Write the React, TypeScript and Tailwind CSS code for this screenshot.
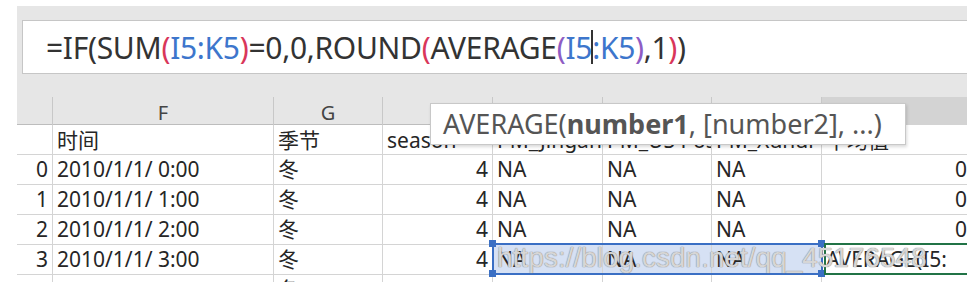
import React from "react";

const font = "font-['Noto_Sans','Noto_Sans_CJK_SC',sans-serif]";

const cols = "grid grid-cols-[36px_221px_109px_110px_110px_109px_110px_150px]";

const letters = ["", "F", "G", "H", "I", "J", "K", "L"];
const titles = ["", "时间", "季节", "season", "PM_Jingan", "PM_US Post", "PM_Xuhui", "平均值"];

type Row = { idx: string; time: string };

const rows: Row[] = [
  { idx: "0", time: "2010/1/1/ 0:00" },
  { idx: "1", time: "2010/1/1/ 1:00" },
  { idx: "2", time: "2010/1/1/ 2:00" },
  { idx: "3", time: "2010/1/1/ 3:00" },
  { idx: "", time: "" },
];

function Cell({ children, right, className = "" }: { children?: React.ReactNode; right?: boolean; className?: string }) {
  return (
    <div
      className={`h-[30px] border-r border-b border-[#d4d4d4] flex items-center overflow-hidden whitespace-nowrap px-[4px] ${
        right ? "justify-end" : ""
      } ${className}`}
    >
      {children}
    </div>
  );
}

function Handle({ className }: { className: string }) {
  return <div className={`absolute w-[7px] h-[7px] bg-[#3a6fc4] ${className}`} />;
}

export default function App() {
  return (
    <div className={`relative w-[967px] h-[282px] overflow-hidden bg-white pt-[6px] pl-[17px] ${font} text-[#262626]`}>
      <div className="bg-[#e6e6e6]">
        {/* formula bar */}
        <div className="pt-[14px] pl-[5px] pb-[23px]">
          <div className="h-[54px] bg-white border border-[#c6c6c6] border-r-0 flex items-center pl-[23px] text-[30px] text-[#333] tracking-[-0.3px]">
            <span>=IF(SUM</span>
            <span className="text-[#d9365a]">(</span>
            <span className="text-[#3d76cc]">I5:K5</span>
            <span className="text-[#d9365a]">)</span>
            <span>=0,0,ROUND</span>
            <span className="text-[#d9365a]">(</span>
            <span>AVERAGE</span>
            <span className="text-[#8e5cc4]">(</span>
            <span className="text-[#3d76cc]">I5</span>
            <span className="inline-block w-[2px] h-[34px] bg-[#333] -mx-[1px]" />
            <span className="text-[#3d76cc]">:K5</span>
            <span className="text-[#8e5cc4]">)</span>
            <span>,1</span>
            <span className="text-[#d9365a]">)</span>
            <span>)</span>
          </div>
        </div>

        {/* column letters */}
        <div className={`${cols} h-[28px] border-b border-[#bdbdbd] text-[20px] text-[#444]`}>
          {letters.map((l, i) => (
            <div
              key={i}
              className={`flex items-center justify-center border-r border-[#c8c8c8] ${
                i === 7 ? "bg-[#d3d3d3] border-b-2 border-b-[#217346]" : ""
              }`}
            >
              {l}
            </div>
          ))}
        </div>
      </div>

      {/* sheet body */}
      <div className="relative bg-white text-[21px]">
        <div className={cols}>
          {titles.map((t, i) => (
            <Cell key={i} className="pt-[2px]">
              {t}
            </Cell>
          ))}
        </div>
        {rows.map((r, ri) => {
          const sel = ri === 3;
          return (
            <div key={ri} className={cols}>
              <Cell right>{r.idx}</Cell>
              <Cell>{r.time}</Cell>
              <Cell>{"冬"}</Cell>
              <Cell right>{r.idx ? "4" : ""}</Cell>
              <Cell className={sel ? "bg-[#d6e1f4]" : ""}>{r.idx ? "NA" : ""}</Cell>
              <Cell className={sel ? "bg-[#d6e1f4]" : ""}>{r.idx ? "NA" : ""}</Cell>
              <Cell className={sel ? "bg-[#d6e1f4]" : ""}>{r.idx ? "NA" : ""}</Cell>
              <Cell right={!sel}>{sel ? "AVERAGE(I5:" : r.idx ? "0" : ""}</Cell>
            </div>
          );
        })}

        {/* selection range */}
        <div className="absolute left-[475px] top-[118px] w-[331px] h-[32px] border-2 border-[#3a6fc4]" />
        <Handle className="left-[472px] top-[115px]" />
        <Handle className="left-[801px] top-[115px]" />
        <Handle className="left-[472px] top-[145px]" />
        <Handle className="left-[801px] top-[145px]" />
        {/* active cell */}
        <div className="absolute left-[807px] top-[118px] w-[160px] h-[32px] border-2 border-[#217346]" />

        {/* watermark */}
        <div className="absolute left-[480px] top-[112px] text-[28px] text-[rgba(240,240,240,0.75)] [text-shadow:0_0_1px_#8a8a8a,0_0_1px_#8a8a8a] font-['Liberation_Sans',sans-serif] whitespace-nowrap">
          https://blog.csdn.net/qq_45176548
        </div>
      </div>

      {/* function tooltip */}
      <div className="absolute left-[430px] top-[103px] w-[476px] h-[42px] bg-white border border-[#c8c8c8] shadow-[1px_2px_3px_rgba(0,0,0,0.15)] flex items-center pl-[12px] text-[27px] text-[#555] whitespace-nowrap">
        AVERAGE(<span className="font-bold">number1</span>, [number2], ...)
      </div>
    </div>
  );
}
